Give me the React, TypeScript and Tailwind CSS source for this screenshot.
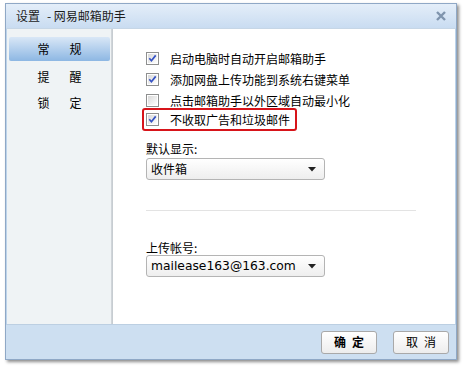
import React from "react";

const CJK = { fontFamily: '"Noto Sans CJK SC", "Noto Sans", sans-serif' };

function Check({ checked }: { checked: boolean }) {
  return (
    <svg width="13" height="13" viewBox="0 0 13 13" className="shrink-0">
      <defs>
        <linearGradient id="cbg" x1="0" y1="0" x2="1" y2="1">
          <stop offset="0" stopColor="#d8d8d8" />
          <stop offset="1" stopColor="#ffffff" />
        </linearGradient>
      </defs>
      <rect x="0.5" y="0.5" width="12" height="12" fill="#fff" stroke="#8e8f8f" />
      <rect x="2" y="2" width="9" height="9" fill="url(#cbg)" />
      {checked && (
        <path d="M3.3 6.3 L5.4 8.7 L9.7 3.4" fill="none" stroke="#3552c4" strokeWidth="1.7" />
      )}
    </svg>
  );
}

function Select({ label, mono }: { label: string; mono?: boolean }) {
  return (
    <div className="w-[179px] h-[22px] rounded-[3px] border border-[#b4b4b4] bg-gradient-to-b from-white to-[#eeeeee] flex items-center pl-[4px] pr-[8px] justify-between">
      <span
        className="text-[12px] text-black"
        style={mono ? { fontFamily: '"DejaVu Sans", sans-serif', fontSize: "12.3px" } : CJK}
      >
        {label}
      </span>
      <svg width="8" height="5" viewBox="0 0 8 5">
        <path d="M0 0 H8 L4 4.5 Z" fill="#222" />
      </svg>
    </div>
  );
}

export default function App() {
  const items = [
    { t: "启动电脑时自动开启邮箱助手", c: true },
    { t: "添加网盘上传功能到系统右键菜单", c: true },
    { t: "点击邮箱助手以外区域自动最小化", c: false },
  ];
  return (
    <div className="w-[463px] h-[366px] bg-white overflow-hidden" style={CJK}>
      <div className="ml-[5px] mt-[3px] w-[452px] h-[357px] border border-[#8fa8c6] shadow-[2px_2px_3px_rgba(0,0,0,0.45)] flex flex-col">
        {/* title bar */}
        <div className="h-[25px] bg-gradient-to-b from-[#e4eef9] to-[#c9dcf1] flex items-center justify-between pl-[10px] pr-[10px] border-b border-[#c6d6e6]">
          <span className="text-[12px] text-[#1b1b1b] flex">
            <span>设置</span>
            <span className="ml-[7px]">- 网易邮箱助手</span>
          </span>
          <svg width="10" height="10" viewBox="0 0 10 10">
            <path d="M1 1 L9 9 M9 1 L1 9" stroke="#7f94ad" strokeWidth="2.4" />
          </svg>
        </div>
        {/* body */}
        <div className="h-[295px] flex border-l border-[#bcd3ea] border-r border-r-[#bcd3ea]">
          <div className="w-[104px] bg-[#eff3f5] pt-[8px] pl-[2px] pr-[1px] flex flex-col">
            <div className="h-[24px] rounded-[2px] bg-gradient-to-b from-[#d9e7f6] to-[#8db7e3] flex items-center justify-center text-[12px] text-black tracking-[20px] pl-[20px]">
              常规
            </div>
            <div className="h-[27px] mt-[2px] flex items-center justify-center text-[12px] text-black tracking-[20px] pl-[20px]">
              提醒
            </div>
            <div className="h-[26px] flex items-center justify-center text-[12px] text-black tracking-[20px] pl-[20px]">
              锁定
            </div>
          </div>
          <div className="w-[2px] bg-gradient-to-r from-[#d4d9dd] to-[#c3c9ce]" />
          <div className="flex-1 bg-white pl-[33px] pt-[19px] flex flex-col">
            {items.map((it) => (
              <div key={it.t} className="h-[21px] flex items-center gap-[11px]">
                <Check checked={it.c} />
                <span className="text-[12px] text-black">{it.t}</span>
              </div>
            ))}
            <div className="-mt-[3px] -ml-[4px] w-[155px] h-[23px] border-2 border-[#d7141a] rounded-[3px] flex items-center pl-[2px] gap-[11px]">
              <Check checked={true} />
              <span className="text-[12px] text-black">不收取广告和垃圾邮件</span>
            </div>
            <div className="mt-[10px] text-[12px] leading-[16px] text-black">默认显示:</div>
            <div className="mt-[1px]">
              <Select label="收件箱" />
            </div>
            <div className="mt-[30px] w-[270px] h-px bg-[#e3e3e3]" />
            <div className="mt-[29px] text-[12px] leading-[16px] text-black">上传帐号:</div>
            <div className="mt-[-1px]">
              <Select label="mailease163@163.com" mono />
            </div>
          </div>
        </div>
        {/* bottom bar */}
        <div className="flex-1 bg-[#cddff1] border-t border-[#bccfe2] flex items-center justify-end pr-[7px] gap-[16px]">
          <button className="w-[56px] h-[23px] rounded-[3px] border border-[#a9a9a9] bg-gradient-to-b from-white to-[#ededed] text-[12px] font-bold text-black tracking-[6px] pl-[6px]">
            确定
          </button>
          <button className="w-[56px] h-[23px] rounded-[3px] border border-[#a9a9a9] bg-gradient-to-b from-white to-[#ededed] text-[12px] text-black tracking-[6px] pl-[6px]">
            取消
          </button>
        </div>
      </div>
    </div>
  );
}
